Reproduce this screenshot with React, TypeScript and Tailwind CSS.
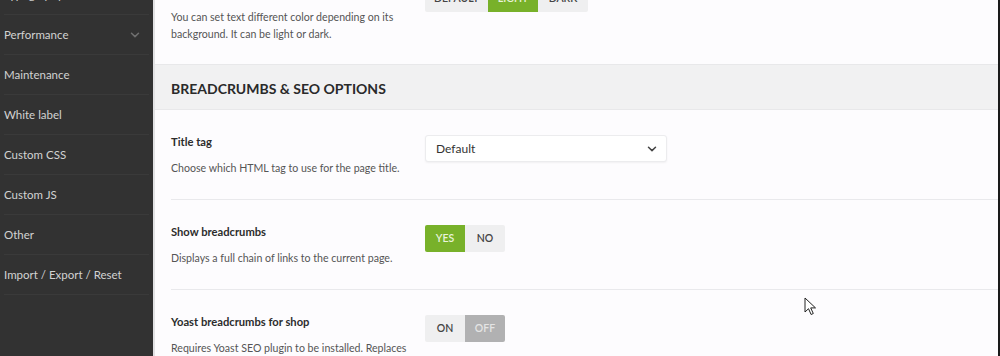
import React from "react";

const font = { fontFamily: 'Lato, "Open Sans", sans-serif' };

const menu = ["Typography", "Performance", "Maintenance", "White label", "Custom CSS", "Custom JS", "Other", "Import / Export / Reset"];

function Chevron({ className }: { className?: string }) {
  return (
    <svg width="10" height="6" viewBox="0 0 10 6" fill="none" stroke="currentColor" strokeWidth="1.5" strokeLinecap="round" strokeLinejoin="round" className={className} aria-hidden="true">
      <path d="M1.5 1.2l3.5 3.4 3.5-3.4" />
    </svg>
  );
}

function Cursor() {
  return (
    <svg width="13" height="19" viewBox="0 0 13 19" className="absolute left-[804px] top-[297px]" aria-hidden="true">
      <path d="M1 1v14l3.5-3.3 2.6 5.8 2.2-1-2.6-5.6H11.5Z" fill="#fff" stroke="#222" strokeWidth="1" strokeLinejoin="round" />
    </svg>
  );
}

function Row({ title, desc, children }: { title: string; desc: string; children: React.ReactNode }) {
  return (
    <div className="flex h-[90px] border-b border-[#e9e9ec] pt-[24px]">
      <div className="w-[254px] shrink-0">
        <div className="text-[11.2px] font-bold leading-[16px] text-[#2c2c2c]">{title}</div>
        <div className="mt-[10px] text-[10.6px] leading-[16px] text-[#555]">{desc}</div>
      </div>
      <div className="mt-[1px]">{children}</div>
    </div>
  );
}

function Toggle({ left, right, on }: { left: string; right: string; on: "left" | "right" }) {
  return (
    <div className="flex h-[27px] w-[80px] overflow-hidden rounded-[2px] text-[10.5px] font-semibold">
      <div className={on === "left" ? "flex w-[40px] items-center justify-center bg-[#78b12a] text-[#e9f3dc]" : "flex w-[40px] items-center justify-center bg-[#efeff0] text-[#444]"}>
        {left}
      </div>
      <div className={on === "right" ? "flex w-[40px] items-center justify-center bg-[#b1b1b2] text-[#e4e4e4]" : "flex w-[40px] items-center justify-center bg-[#efeff0] text-[#444]"}>
        {right}
      </div>
    </div>
  );
}

export default function App() {
  return (
    <div className="relative flex h-[356px] w-[1000px] overflow-hidden bg-[#fdfcfe]" style={font}>
      <aside className="w-[153px] shrink-0 bg-[#323232]">
        <ul className="-mt-[25px] px-[4px]">
          {menu.map((m) => (
            <li key={m} className="flex h-[40px] items-center justify-between border-b border-[#3a3a3a] pr-[9px] text-[11.5px] text-[#d2d2d2]">
              <span>{m}</span>
              {m === "Performance" && <Chevron className="text-[#6f6f6f]" />}
            </li>
          ))}
        </ul>
      </aside>
      <div className="w-[2px] shrink-0 bg-[#e2e2e4]" />

      <main className="flex-1">
        <div className="flex h-[64px] pl-[16px]">
          <div className="w-[254px] shrink-0 pt-[9px] text-[10.6px] leading-[17px] text-[#555]">
            You can set text different color depending on its background. It can be light or dark.
          </div>
          <div className="-mt-[15px] flex h-[27px] overflow-hidden rounded-[2px] text-[10.5px] font-semibold">
            <div className="flex w-[63px] items-center justify-center bg-[#efeff0] text-[#444]">DEFAULT</div>
            <div className="flex w-[50px] items-center justify-center bg-[#78b12a] text-[#e9f3dc]">LIGHT</div>
            <div className="flex w-[50px] items-center justify-center bg-[#efeff0] text-[#444]">DARK</div>
          </div>
        </div>

        <div className="flex h-[46px] items-center border-y border-[#e8e8ea] bg-[#f1f1f2] pl-[16px] pt-[2px] text-[14px] font-bold text-[#2a2a2a]">
          BREADCRUMBS &amp; SEO OPTIONS
        </div>

        <div className="pl-[16px]">
          <Row title="Title tag" desc="Choose which HTML tag to use for the page title.">
            <div className="flex h-[27px] w-[242px] items-center justify-between rounded-[3px] border border-[#ececee] bg-white pl-[10px] pr-[9px] text-[12px] text-[#333] shadow-[0_1px_2px_rgba(0,0,0,0.05)]">
              <span>Default</span>
              <Chevron className="text-[#444]" />
            </div>
          </Row>
          <Row title="Show breadcrumbs" desc="Displays a full chain of links to the current page.">
            <Toggle left="YES" right="NO" on="left" />
          </Row>
          <Row title="Yoast breadcrumbs for shop" desc="Requires Yoast SEO plugin to be installed. Replaces">
            <Toggle left="ON" right="OFF" on="right" />
          </Row>
        </div>
      </main>
      <div className="w-[2px] shrink-0 bg-[#1a1a1a]" />
      <Cursor />
    </div>
  );
}
